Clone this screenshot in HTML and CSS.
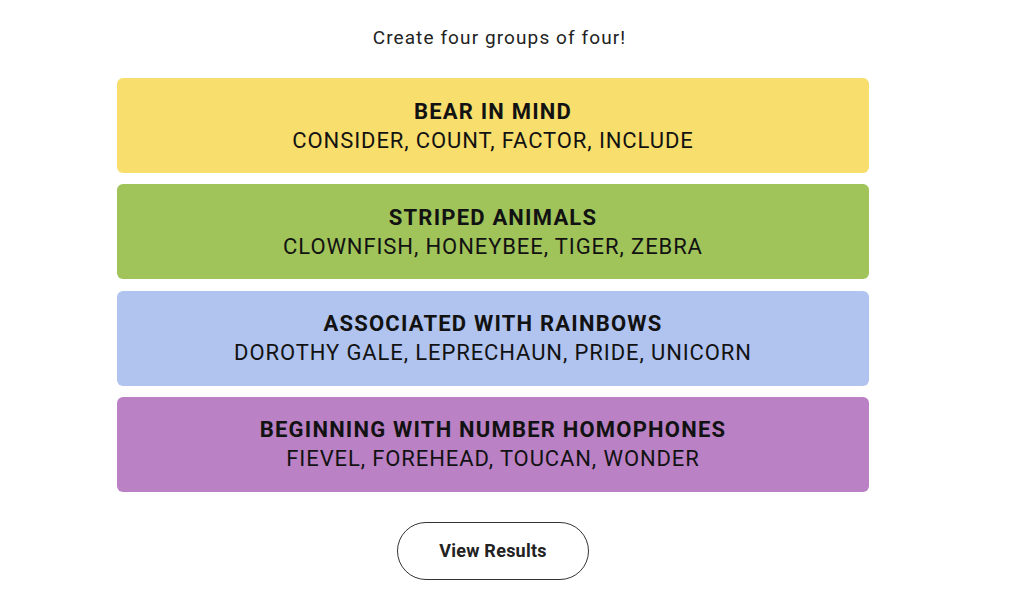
FILE: index.html
```html
<!DOCTYPE html>
<html>
<head>
<meta charset="utf-8">
<link rel="stylesheet" href="styles.css">
</head>
<body>
<main class="game">
  <p class="prompt">Create four groups of four!</p>
  <section class="groups">
    <div class="group yellow">
      <h3 class="group-title">BEAR IN MIND</h3>
      <p class="group-words">CONSIDER, COUNT, FACTOR, INCLUDE</p>
    </div>
    <div class="group green">
      <h3 class="group-title">STRIPED ANIMALS</h3>
      <p class="group-words">CLOWNFISH, HONEYBEE, TIGER, ZEBRA</p>
    </div>
    <div class="group blue">
      <h3 class="group-title">ASSOCIATED WITH RAINBOWS</h3>
      <p class="group-words">DOROTHY GALE, LEPRECHAUN, PRIDE, UNICORN</p>
    </div>
    <div class="group purple">
      <h3 class="group-title">BEGINNING WITH NUMBER HOMOPHONES</h3>
      <p class="group-words">FIEVEL, FOREHEAD, TOUCAN, WONDER</p>
    </div>
  </section>
  <div class="actions">
    <button class="results-btn">View Results</button>
  </div>
</main>
</body>
</html>
```
FILE: styles.css
```css
* { box-sizing: border-box; }
html, body { margin: 0; padding: 0; background: #fff; }
body {
  font-family: "Roboto", "Liberation Sans", sans-serif;
  color: #121212;
  width: 1024px;
  height: 602px;
  overflow: hidden;
}
.game {
  display: flex;
  flex-direction: column;
  align-items: center;
  padding-top: 27px;
  padding-right: 38px;
}
.prompt {
  margin: 0 0 0 13px;
  font-size: 19px;
  line-height: 22px;
  letter-spacing: 1.1px;
  color: #222;
}
.groups {
  margin-top: 29px;
  width: 752px;
  display: flex;
  flex-direction: column;
  gap: 11.33px;
}
.group {
  height: 95px;
  border-radius: 6px;
  display: flex;
  flex-direction: column;
  align-items: center;
  justify-content: center;
}
.group-title {
  margin: 0;
  font-size: 22px;
  font-weight: 700;
  line-height: 29px;
  letter-spacing: 1.2px;
}
.group-words {
  margin: 0;
  font-size: 22px;
  line-height: 29px;
  letter-spacing: 0.9px;
}
.yellow { background: #f8de6c; }
.green { background: #a0c35a; }
.blue { background: #b0c4ef; }
.purple { background: #ba81c5; }
.actions {
  margin-top: 30px;
}
.results-btn {
  width: 192px;
  height: 58px;
  border: 1.5px solid #333;
  border-radius: 29px;
  background: #fff;
  font-family: "Roboto", "Liberation Sans", sans-serif;
  font-size: 18px;
  font-weight: 700;
  letter-spacing: 0.25px;
  color: #222;
}
```
